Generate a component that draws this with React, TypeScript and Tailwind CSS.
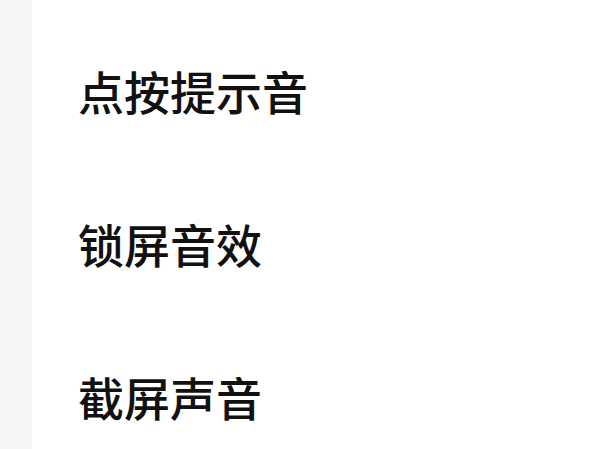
const items = ["点按提示音", "锁屏音效", "截屏声音"];

export default function App() {
  return (
    <div className="flex h-[449px] w-[600px] overflow-hidden bg-white">
      <div className="w-[32px] shrink-0 bg-[#f5f5f5]" />
      <div className="flex flex-1 flex-col pt-[13px] pl-[46px]">
        {items.map((label) => (
          <div key={label} className="flex h-[153px] shrink-0 items-center">
            <span className="text-[46px] font-medium leading-none text-[#111] [font-family:'Noto_Sans_CJK_SC',sans-serif]">
              {label}
            </span>
          </div>
        ))}
      </div>
    </div>
  );
}
